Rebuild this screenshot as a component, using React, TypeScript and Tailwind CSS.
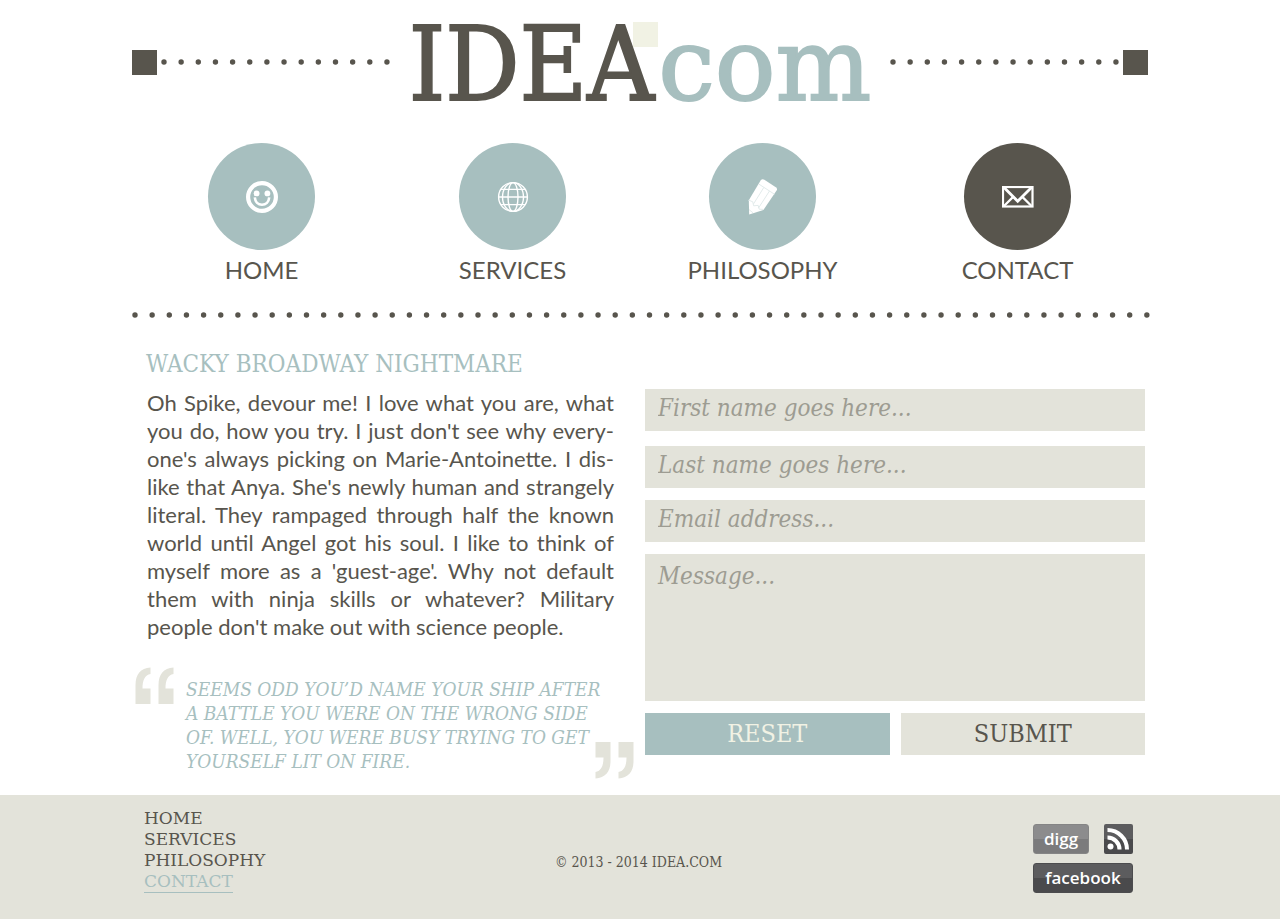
import React from "react";

const slab = "font-['DejaVu_Serif_Condensed','DejaVu_Serif',serif]";

function Dots({ count }: { count: number }) {
  const width = Math.round((count - 1) * 17.15 + 6);
  return (
    <svg viewBox={`0 0 ${width} 6`} width={width} height="6" className="shrink-0" aria-hidden="true">
      <line x1="3" y1="3" x2={width - 2} y2="3" stroke="#58554d" strokeWidth="5.4" strokeLinecap="round" strokeDasharray="0 17.15" />
    </svg>
  );
}

function Smile() {
  return (
    <svg width="32" height="32" viewBox="0 0 32 32" fill="none" stroke="white" aria-hidden="true">
      <circle cx="16" cy="16" r="13.9" strokeWidth="4.2" />
      <circle cx="10.6" cy="12.4" r="2.9" fill="white" stroke="none" />
      <circle cx="21.4" cy="12.4" r="2.9" fill="white" stroke="none" />
      <path d="M8.8 16.4c.4 4.6 3.4 7.4 7.2 7.4s6.8-2.8 7.2-7.4" strokeWidth="2.6" />
    </svg>
  );
}

function Globe() {
  return (
    <svg width="32" height="32" viewBox="0 0 32 32" fill="none" stroke="white" strokeWidth="1.4" aria-hidden="true">
      <circle cx="16" cy="16" r="14.4" />
      <ellipse cx="16" cy="16" rx="5" ry="14.4" />
      <ellipse cx="16" cy="16" rx="10.5" ry="14.4" />
      <path d="M1.6 16h28.8M4 8.4h24M4 23.6h24" />
    </svg>
  );
}

function Pencil() {
  return (
    <svg width="30" height="36" viewBox="0 0 30 36" aria-hidden="true">
      <path d="M12.6 1.4Q14.2-.4 16.4.8L27.8 8.2Q29.800 9.600 28.600 11.600L15.400 31 1.200 35.600.8 21.200Z" fill="white" />
      <path d="M11 5.200l15.400 10M15.800 8.500L5.600 24.800M21.500 12L10.500 29M.8 21.200l4 1.600.8 4 4.600-.4 1 3.800 4.200.2M1 30.600l4 3.200" fill="none" stroke="#dfe9e9" strokeWidth=".9" />
    </svg>
  );
}

function Mail() {
  return (
    <svg width="32" height="22" viewBox="0 0 32 22" fill="none" stroke="white" aria-hidden="true">
      <rect x="1" y="1" width="29.5" height="19.5" strokeWidth="2.2" />
      <path d="M2 1.5l13.7 13.7L29.500 1.500" strokeWidth="2.8" />
      <path d="M2 20l9.400-9.400M29.500 20l-9.400-9.400" strokeWidth="2.2" />
    </svg>
  );
}

function QuoteMark({ className = "" }: { className?: string }) {
  return (
    <svg width="39" height="37" viewBox="0 0 39 37" fill="#e3e3da" className={className} aria-hidden="true">
      <path d="M.5 37V18C.5 7 5.5 1.5 15.500.5V7C10 8 7.500 13 7.500 21.500h8V37z" />
      <path d="M23.500 37V18C23.500 7 28.500 1.500 38.500.5V7C33 8 30.500 13 30.500 21.500h8V37z" />
    </svg>
  );
}

const nav = [
  { label: "HOME", icon: <Smile />, active: false },
  { label: "SERVICES", icon: <Globe />, active: false },
  { label: "PHILOSOPHY", icon: <Pencil />, active: false },
  { label: "CONTACT", icon: <Mail />, active: true },
];

const story = [
  "Oh Spike, devour me! I love what you are, what",
  "you do, how you try. I just don't see why every-",
  "one's always picking on Marie-Antoinette. I dis-",
  "like that Anya. She's newly human and strangely",
  "literal. They rampaged through half the known",
  "world until Angel got his soul. I like to think of",
  "myself more as a 'guest-age'. Why not default",
  "them with ninja skills or whatever? Military",
  "people don't make out with science people.",
];

const quote = [
  "SEEMS ODD YOU’D NAME YOUR SHIP AFTER",
  "A BATTLE YOU WERE ON THE WRONG SIDE",
  "OF. WELL, YOU WERE BUSY TRYING TO GET",
  "YOURSELF LIT ON FIRE.",
];

const field =
  "block w-full bg-[#e3e3da] px-[13px] text-[24px] italic text-[#58554d] placeholder:text-[#9d9c92] placeholder:opacity-100 outline-none focus:ring-2 focus:ring-[#a7bfbf]";

export default function App() {
  return (
    <div className="flex min-h-screen flex-col bg-white font-[Lato,sans-serif] text-[#58554d]">
      <div className="mx-auto w-full max-w-[1016px] grow">
        <header className="flex h-[125px] items-start justify-between">
          <div className="flex h-[124px] items-center gap-1">
            <span className="size-[25px] bg-[#58554d]" />
            <Dots count={14} />
          </div>
          <h1 className={`pt-[2px] leading-[124px] ${slab}`}>
            <a href="#home" className="flex items-baseline gap-1">
              <span className="relative text-[103px] [-webkit-text-stroke:2px_#58554d]">
                IDEA
                <span className="absolute -right-1 top-[20px] size-[25px] bg-[#f1f2e4]" />
              </span>
              <span className="font-['DejaVu_Serif',serif] text-[101px] text-[#a7bfbf] [-webkit-text-stroke:2px_#a7bfbf]">com</span>
            </a>
          </h1>
          <div className="flex h-[124px] items-center gap-1">
            <Dots count={14} />
            <span className="size-[25px] bg-[#58554d]" />
          </div>
        </header>

        <nav className="grid grid-cols-[251fr_251fr_249fr_261fr] pl-1 pt-[18px]">
          {nav.map((n) => (
            <a key={n.label} href={`#${n.label.toLowerCase()}`} className="flex flex-col items-center gap-[3px]">
              <span className={`flex size-[107px] items-center justify-center rounded-full ${n.active ? "bg-[#58554d]" : "bg-[#a7bfbf]"}`}>
                {n.icon}
              </span>
              <span className="text-[24px] leading-[34px]">{n.label}</span>
            </a>
          ))}
        </nav>

        <div className="flex h-[60px] items-center pb-1">
          <Dots count={60} />
        </div>

        <main className="grid grid-cols-[499fr_500fr] gap-x-[11px] px-[3px]">
          <section className="min-w-0">
            <h2 className={`ml-[11px] text-[24px] leading-[34px] text-[#a7bfbf] ${slab}`}>WACKY BROADWAY NIGHTMARE</h2>
            <p className="ml-3 mr-5 mt-2 text-[22px] leading-7">
              {story.map((line, i) => (
                <span key={line} className={`block whitespace-nowrap ${i < story.length - 1 ? "[text-align-last:justify]" : ""}`}>
                  {line}
                </span>
              ))}
            </p>
            <blockquote className={`mt-[26px] flex justify-between text-[19px] italic leading-6 text-[#a7bfbf] ${slab}`}>
              <QuoteMark className="shrink-0" />
              <p className="ml-3 mt-[10px] min-w-0 grow whitespace-nowrap pb-[6px]">
                {quote.map((line) => (
                  <span key={line} className="block">{line}</span>
                ))}
              </p>
              <QuoteMark className="shrink-0 rotate-180 self-end" />
            </blockquote>
          </section>

          <form className={`flex flex-col gap-3 pt-[42px] ${slab}`} onSubmit={(e) => e.preventDefault()}>
            <input aria-label="First name" placeholder="First name goes here..." className={`mb-[3px] h-[42px] pb-1 ${field}`} />
            <input aria-label="Last name" placeholder="Last name goes here..." className={`h-[42px] pb-1 ${field}`} />
            <input aria-label="Email address" type="email" placeholder="Email address..." className={`h-[42px] pb-1 ${field}`} />
            <textarea aria-label="Message" placeholder="Message..." className={`h-[147px] resize-none pt-[6px] leading-8 ${field}`} />
            <div className="grid grid-cols-2 gap-[11px] text-[25px]">
              <button type="reset" className="h-[42px] bg-[#a7bfbf] text-[#f1f2e4]">RESET</button>
              <button type="submit" className="h-[42px] bg-[#e3e3da]">SUBMIT</button>
            </div>
          </form>
        </main>
      </div>

      <footer className={`mt-2 bg-[#e3e3da] ${slab}`}>
        <div className="mx-auto grid h-[124px] w-full max-w-[1016px] grid-cols-3 pl-3 pr-[15px]">
          <ul className="pt-[13px] font-['DejaVu_Serif',serif] text-[17px] leading-[21px]">
            {nav.map((n) => (
              <li key={n.label}>
                <a href={`#${n.label.toLowerCase()}`} className={n.active ? "inline-block border-b border-[#a7bfbf] text-[#a7bfbf]" : ""}>
                  {n.label}
                </a>
              </li>
            ))}
          </ul>
          <p className="self-center whitespace-nowrap pt-[10px] text-center text-[14px] leading-5">© 2013 - 2014 IDEA.COM</p>
          <div className="flex w-[100px] flex-col gap-[9px] justify-self-end pt-[29px] font-['Open_Sans',sans-serif] text-[17px] font-semibold leading-7 text-white">
            <div className="flex justify-between">
              <a href="#digg" className="flex h-[30px] w-14 items-center justify-center rounded-[3px] border border-[#858585] bg-linear-to-b from-[#8c8c8d] from-50% to-[#7b7b7c] to-50%">digg</a>
              <a href="#rss" aria-label="RSS" className="flex h-[30px] w-[29px] items-center justify-center rounded-[2px] bg-linear-to-b from-[#5c5c5e] from-50% to-[#4a4a4c] to-50%">
                <svg width="24" height="24" viewBox="0 0 24 24" fill="none" stroke="white" strokeWidth="4" aria-hidden="true">
                  <circle cx="4.5" cy="19.5" r="3" fill="white" stroke="none" />
                  <path d="M1.5 10.5a12 12 0 0 1 12 12M1.5 3a19.5 19.5 0 0 1 19.5 19.5" />
                </svg>
              </a>
            </div>
            <a href="#facebook" className="flex h-[30px] items-center justify-center rounded-[3px] border border-[#4c4c4e] bg-linear-to-b from-[#5c5c5e] from-50% to-[#4a4a4c] to-50%">facebook</a>
          </div>
        </div>
      </footer>
    </div>
  );
}
